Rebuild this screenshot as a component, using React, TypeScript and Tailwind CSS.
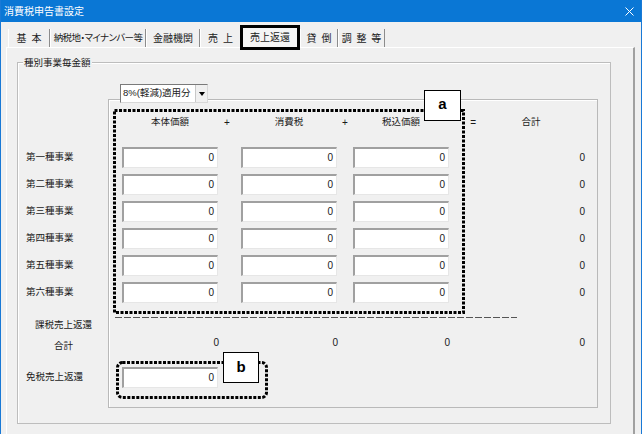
import React from "react";

const tabs = [
  { label: "基 本", w: "w-[42px]" },
  { label: "納税地・マイナンバー等", w: "w-[96px]", palt: true },
  { label: "金融機関", w: "w-[54px]" },
  { label: "売 上", w: "w-[40px]", noSep: true },
  { label: "売上返還", w: "w-[60px]", active: true },
  { label: "貸 倒", w: "w-[38px]" },
  { label: "調 整 等", w: "w-[47px]" },
];

const rows = ["第一種事業", "第二種事業", "第三種事業", "第四種事業", "第五種事業", "第六種事業"];

function Field({ value = "0" }: { value?: string }) {
  return (
    <div className="flex h-[21px] w-[96px] items-center justify-end border-t-2 border-l-2 border-r border-b border-t-[#a0a0a0] border-l-[#a0a0a0] border-r-[#e6e6e6] border-b-[#e6e6e6] bg-white pr-[3px] pb-[2px] text-[10px]">
      {value}
    </div>
  );
}

function Dotted({ w, h, r = 0 }: { w: number; h: number; r?: number }) {
  return (
    <svg width={w} height={h} className="block">
      <rect
        x={1.5}
        y={1.5}
        width={w - 3}
        height={h - 3}
        rx={r}
        fill="none"
        stroke="#000"
        strokeWidth={3}
        strokeDasharray="3 1.5"
      />
    </svg>
  );
}

export default function App() {
  return (
    <div className="relative h-[434px] w-[642px] overflow-hidden border-x border-[#1979d6] bg-[#f0f0f0] font-['Liberation_Sans','Noto_Sans_CJK_JP',sans-serif] text-[#1a1a1a]">
      {/* title bar */}
      <div className="flex h-[22px] items-center justify-between bg-[#0a77d5] pl-[3px] pr-[7px] text-[10px] text-white">
        <span>消費税申告書設定</span>
        <svg width="9" height="9" viewBox="0 0 9 9">
          <path d="M0.5 0.5 L8.5 8.5 M8.5 0.5 L0.5 8.5" stroke="#fff" strokeWidth="1" />
        </svg>
      </div>

      <div className="ml-[5px] w-[629px]">
        {/* tabs */}
        <div className="flex h-[25px] items-end pl-[2px] text-[10px] [word-spacing:2px]">
          {tabs.map((t) =>
            t.active ? (
              <div
                key={t.label}
                className={`relative z-10 -mb-[3px] flex h-[25px] ${t.w} items-center justify-center border-[3px] border-black bg-[#f5f5f5]`}
              >
                {t.label}
              </div>
            ) : (
              <div
                key={t.label}
                className={`flex h-[18px] ${t.w} items-center justify-center whitespace-nowrap border-l border-white ${
                  t.noSep ? "" : "border-r border-r-[#8c8c8c]"
                } ${t.palt ? "text-[9.5px] tracking-[-0.6px] [font-feature-settings:'palt']" : ""}`}
              >
                {t.label}
              </div>
            ),
          )}
        </div>

        {/* tab page */}
        <div className="h-[400px] border-t border-l border-white border-r-2 border-r-[#a0a0a0]">
          <div className="relative ml-[10px] mt-[14px] h-[362px] w-[594px] border border-[#bdbdbd] text-[9.5px] shadow-[inset_1px_1px_0_#fff]">
            <span className="absolute -top-[7px] left-[5px] bg-[#f0f0f0] px-[1px] leading-[14px]">種別事業毎金額</span>

            <div className="pt-[21px]">
              <div className="relative z-10 ml-[102px] flex h-[19px] w-[88px] border border-t-[#7a7a7a] border-l-[#7a7a7a] border-r-[#d8d8d8] border-b-[#d8d8d8] bg-white">
                <span className="flex flex-1 items-center pl-[2px]">8%(軽減)適用分</span>
                <span className="flex w-[12px] items-center justify-center border-l border-[#c8c8c8] bg-[#f0f0f0]">
                  <span className="h-0 w-0 border-x-[3px] border-t-[4px] border-x-transparent border-t-black" />
                </span>
              </div>

              <div className="-mt-[4px] flex">
                {/* row labels */}
                <div className="w-[90px] pl-[8px]">
                  <div className="h-[45px]" />
                  {rows.map((r) => (
                    <div key={r} className="flex h-[27px] items-center">
                      {r}
                    </div>
                  ))}
                  <div className="ml-[9px] mt-[12px] w-[57px] text-center">
                    <div className="h-[14px] leading-[14px]">課税売上返還</div>
                    <div className="mt-[7px] h-[14px] leading-[14px]">合計</div>
                  </div>
                  <div className="mt-[14px] flex h-[21px] items-center">免税売上返還</div>
                </div>

                {/* amounts panel */}
                <div className="h-[309px] w-[490px] border border-[#b9b9b9] shadow-[inset_1px_1px_0_#fff]">
                  <div className="flex h-[44px] items-center pl-[13px]">
                    <span className="w-[96px] text-center">本体価額</span>
                    <span className="w-[23px] pl-[6px] text-[10px]">+</span>
                    <span className="w-[96px] text-center">消費税</span>
                    <span className="w-[16px] text-center text-[10px]">+</span>
                    <span className="w-[96px] text-center">税込価額</span>
                    <span className="w-[28px] pr-[1px] text-right text-[10px]">=</span>
                    <span className="w-[108px] text-center">合計</span>
                  </div>
                  {rows.map((r) => (
                    <div key={r} className="flex h-[27px] items-center pl-[13px]">
                      <Field />
                      <span className="w-[23px]" />
                      <Field />
                      <span className="w-[16px]" />
                      <Field />
                      <span className="w-[28px]" />
                      <span className="w-[108px] text-right text-[10px]">0</span>
                    </div>
                  ))}
                  <div className="ml-[6px] mt-[11px] h-px w-[402px] bg-[repeating-linear-gradient(90deg,#555_0_7px,transparent_7px_9px)]" />
                  <div className="mt-[14px] flex h-[20px] items-center pl-[13px] text-[10px]">
                    <span className="w-[97px] text-right">0</span>
                    <span className="w-[22px]" />
                    <span className="w-[97px] text-right">0</span>
                    <span className="w-[15px]" />
                    <span className="w-[97px] text-right">0</span>
                    <span className="w-[27px]" />
                    <span className="w-[108px] text-right">0</span>
                  </div>
                  <div className="mt-[15px] flex h-[21px] items-center pl-[13px]">
                    <Field />
                  </div>
                </div>
              </div>
            </div>
          </div>
        </div>
      </div>

      {/* annotations */}
      <div className="absolute left-[112px] top-[109px]">
        <Dotted w={352} h={205} />
      </div>
      <div className="absolute left-[423px] top-[90px] flex h-[31px] w-[37px] items-center justify-center border border-black bg-white pb-[2px] text-[15px] font-bold text-black">
        a
      </div>
      <div className="absolute left-[115px] top-[361px]">
        <Dotted w={152} h={38} r={5} />
      </div>
      <div className="absolute left-[222px] top-[352px] flex h-[31px] w-[36px] items-center justify-center border border-black bg-white text-[15px] font-bold text-black">
        b
      </div>
    </div>
  );
}
